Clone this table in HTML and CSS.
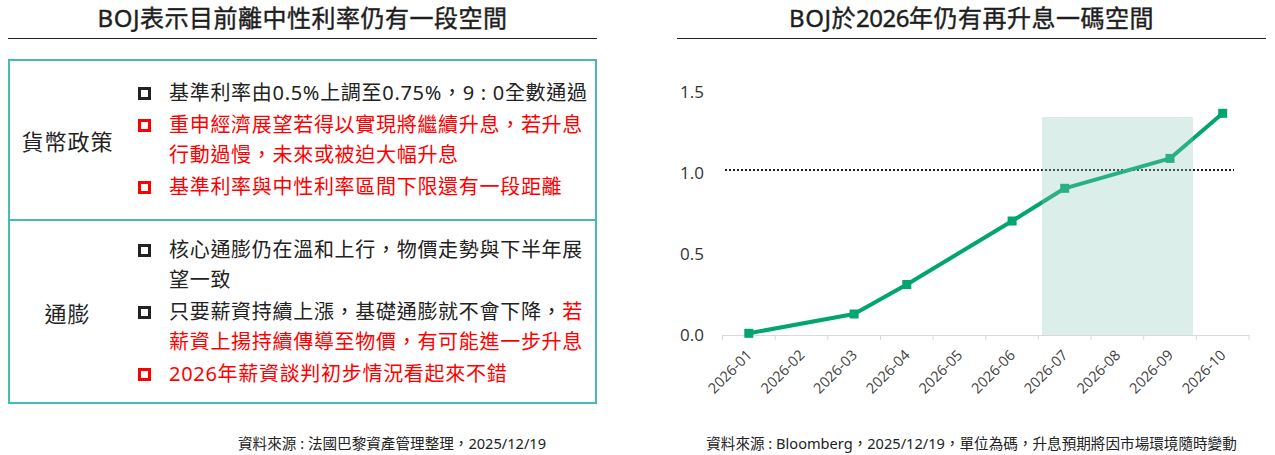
FILE: index.html
```html
<!DOCTYPE html>
<html lang="zh-Hant">
<head>
<meta charset="utf-8">
<title>BOJ</title>
<link rel="stylesheet" href="styles.css">
</head>
<body>
<div class="page">
  <section class="panel">
    <h2 class="title">BOJ表示目前離中性利率仍有一段空間</h2>
    <div class="box">
      <div class="row row-policy">
        <div class="label">貨幣政策</div>
        <ul class="items">
          <li class="item"><span class="bullet"></span><span class="text">基準利率由0.5%上調至0.75%，9 : 0全數通過</span></li>
          <li class="item red"><span class="bullet"></span><span class="text">重申經濟展望若得以實現將繼續升息，若升息<br>行動過慢，未來或被迫大幅升息</span></li>
          <li class="item red"><span class="bullet"></span><span class="text">基準利率與中性利率區間下限還有一段距離</span></li>
        </ul>
      </div>
      <div class="row row-inflation">
        <div class="label">通膨</div>
        <ul class="items">
          <li class="item"><span class="bullet"></span><span class="text">核心通膨仍在溫和上行，物價走勢與下半年展<br>望一致</span></li>
          <li class="item"><span class="bullet"></span><span class="text">只要薪資持續上漲，基礎通膨就不會下降，<span class="hl">若</span><br><span class="hl">薪資上揚持續傳導至物價，有可能進一步升息</span></span></li>
          <li class="item red"><span class="bullet"></span><span class="text">2026年薪資談判初步情況看起來不錯</span></li>
        </ul>
      </div>
    </div>
    <p class="source source-left">資料來源 : 法國巴黎資產管理整理，2025/12/19</p>
  </section>

  <section class="panel">
    <h2 class="title">BOJ於<span class="num">2026</span>年仍有再升息一碼空間</h2>
    <svg class="chart" width="589" height="386" viewBox="0 0 589 386">
      <g class="ylabels">
        <text x="27" y="52">1.5</text>
        <text x="27" y="133">1.0</text>
        <text x="27" y="214">0.5</text>
        <text x="27" y="295">0.0</text>
      </g>
      <line class="ref" x1="48" y1="131" x2="557" y2="131"/>
      <line class="axis" x1="45.5" y1="296.5" x2="572" y2="296.5"/>
      <g class="ticks">
        <line x1="45.5" y1="296" x2="45.5" y2="301"/>
        <line x1="98.2" y1="296" x2="98.2" y2="301"/>
        <line x1="150.8" y1="296" x2="150.8" y2="301"/>
        <line x1="203.5" y1="296" x2="203.5" y2="301"/>
        <line x1="256.1" y1="296" x2="256.1" y2="301"/>
        <line x1="308.8" y1="296" x2="308.8" y2="301"/>
        <line x1="361.4" y1="296" x2="361.4" y2="301"/>
        <line x1="414.1" y1="296" x2="414.1" y2="301"/>
        <line x1="466.7" y1="296" x2="466.7" y2="301"/>
        <line x1="519.4" y1="296" x2="519.4" y2="301"/>
        <line x1="572" y1="296" x2="572" y2="301"/>
      </g>
      <polyline class="series" points="71.8,294.3 177.1,275 229.8,245.5 335.1,182 387.7,149.3 493,119.4 545.7,74.3"/>
      <g class="markers">
        <rect x="67.3" y="289.8" width="9" height="9"/>
        <rect x="172.6" y="270.5" width="9" height="9"/>
        <rect x="225.3" y="241" width="9" height="9"/>
        <rect x="330.6" y="177.5" width="9" height="9"/>
        <rect x="383.2" y="144.8" width="9" height="9"/>
        <rect x="488.5" y="114.9" width="9" height="9"/>
        <rect x="541.2" y="69.8" width="9" height="9"/>
      </g>
      <rect class="shade" x="365" y="78" width="151" height="218"/>
      <g class="xlabels">
        <text x="75.8" y="317" transform="rotate(-45 75.8 317)">2026-01</text>
        <text x="128.5" y="317" transform="rotate(-45 128.5 317)">2026-02</text>
        <text x="181.1" y="317" transform="rotate(-45 181.1 317)">2026-03</text>
        <text x="233.8" y="317" transform="rotate(-45 233.8 317)">2026-04</text>
        <text x="286.4" y="317" transform="rotate(-45 286.4 317)">2026-05</text>
        <text x="339.1" y="317" transform="rotate(-45 339.1 317)">2026-06</text>
        <text x="391.7" y="317" transform="rotate(-45 391.7 317)">2026-07</text>
        <text x="444.4" y="317" transform="rotate(-45 444.4 317)">2026-08</text>
        <text x="497" y="317" transform="rotate(-45 497 317)">2026-09</text>
        <text x="549.7" y="317" transform="rotate(-45 549.7 317)">2026-10</text>
      </g>
    </svg>
    <p class="source source-right">資料來源 : Bloomberg，2025/12/19，單位為碼，升息預期將因市場環境隨時變動</p>
  </section>
</div>
</body>
</html>
```

FILE: styles.css
```css
html, body {
  margin: 0;
  padding: 0;
  background: #ffffff;
}

body {
  font-family: "Noto Sans", "Noto Sans CJK TC", sans-serif;
  color: #222222;
}

.page {
  display: flex;
  gap: 80px;
  padding-left: 8px;
}

.panel {
  width: 589px;
  flex: none;
}

.title {
  margin: 0;
  height: 38px;
  line-height: 36px;
  border-bottom: 1px solid #222222;
  text-align: center;
  font-size: 24px;
  font-weight: 400;
  letter-spacing: 0.5px;
  color: #1e1e1e;
  white-space: nowrap;
  -webkit-text-stroke: 0.4px #1e1e1e;
}

.title .num {
  letter-spacing: -0.5px;
}

.box {
  margin-top: 20px;
  border: 2px solid #45bbb6;
}

.row {
  display: flex;
  align-items: center;
}

.row-policy {
  height: 158px;
  border-bottom: 2px solid #45bbb6;
}

.row-inflation {
  height: 181px;
}

.label {
  width: 115px;
  flex: none;
  text-align: center;
  font-size: 22px;
  letter-spacing: 1px;
  color: #222222;
}

.items {
  list-style: none;
  margin: 0;
  padding: 0 0 0 13px;
  display: flex;
  flex-direction: column;
  gap: 2px;
}

.item {
  display: flex;
  align-items: flex-start;
  font-size: 20px;
  line-height: 30px;
  letter-spacing: 0.7px;
  color: #222222;
  white-space: nowrap;
}

.bullet {
  flex: none;
  width: 13px;
  height: 13px;
  box-sizing: border-box;
  border: 3px solid #222222;
  margin-top: 9px;
  margin-right: 18px;
}

.item.red {
  color: #ff0000;
}

.item.red .bullet {
  border-color: #ff0000;
}

.hl {
  color: #ff0000;
}

.source {
  margin: 0;
  height: 20px;
  line-height: 20px;
  font-size: 15px;
  color: #222222;
  white-space: nowrap;
}

.source-left {
  margin-top: 29px;
  padding-left: 230px;
  font-size: 14.6px;
}

.source-right {
  margin-top: 8px;
  text-align: center;
  font-size: 14.6px;
}

.chart {
  display: block;
}

.ylabels text {
  font-family: "Open Sans", "Noto Sans", sans-serif;
  font-weight: 400;
  font-size: 17px;
  fill: #333333;
  text-anchor: end;
  dominant-baseline: central;
}

.xlabels text {
  font-family: "Open Sans", "Noto Sans", sans-serif;
  font-weight: 400;
  font-size: 14.5px;
  fill: #404040;
  text-anchor: end;
}

.ref {
  stroke: #222222;
  stroke-width: 2;
  stroke-dasharray: 2 2;
}

.axis {
  stroke: #d9d9d9;
  stroke-width: 1;
}

.ticks line {
  stroke: #d9d9d9;
  stroke-width: 1;
}

.series {
  fill: none;
  stroke: #00a66e;
  stroke-width: 4;
  stroke-linejoin: round;
}

.markers rect {
  fill: #00a66e;
}

.shade {
  fill: rgb(139, 200, 184);
  fill-opacity: 0.31;
}
```
